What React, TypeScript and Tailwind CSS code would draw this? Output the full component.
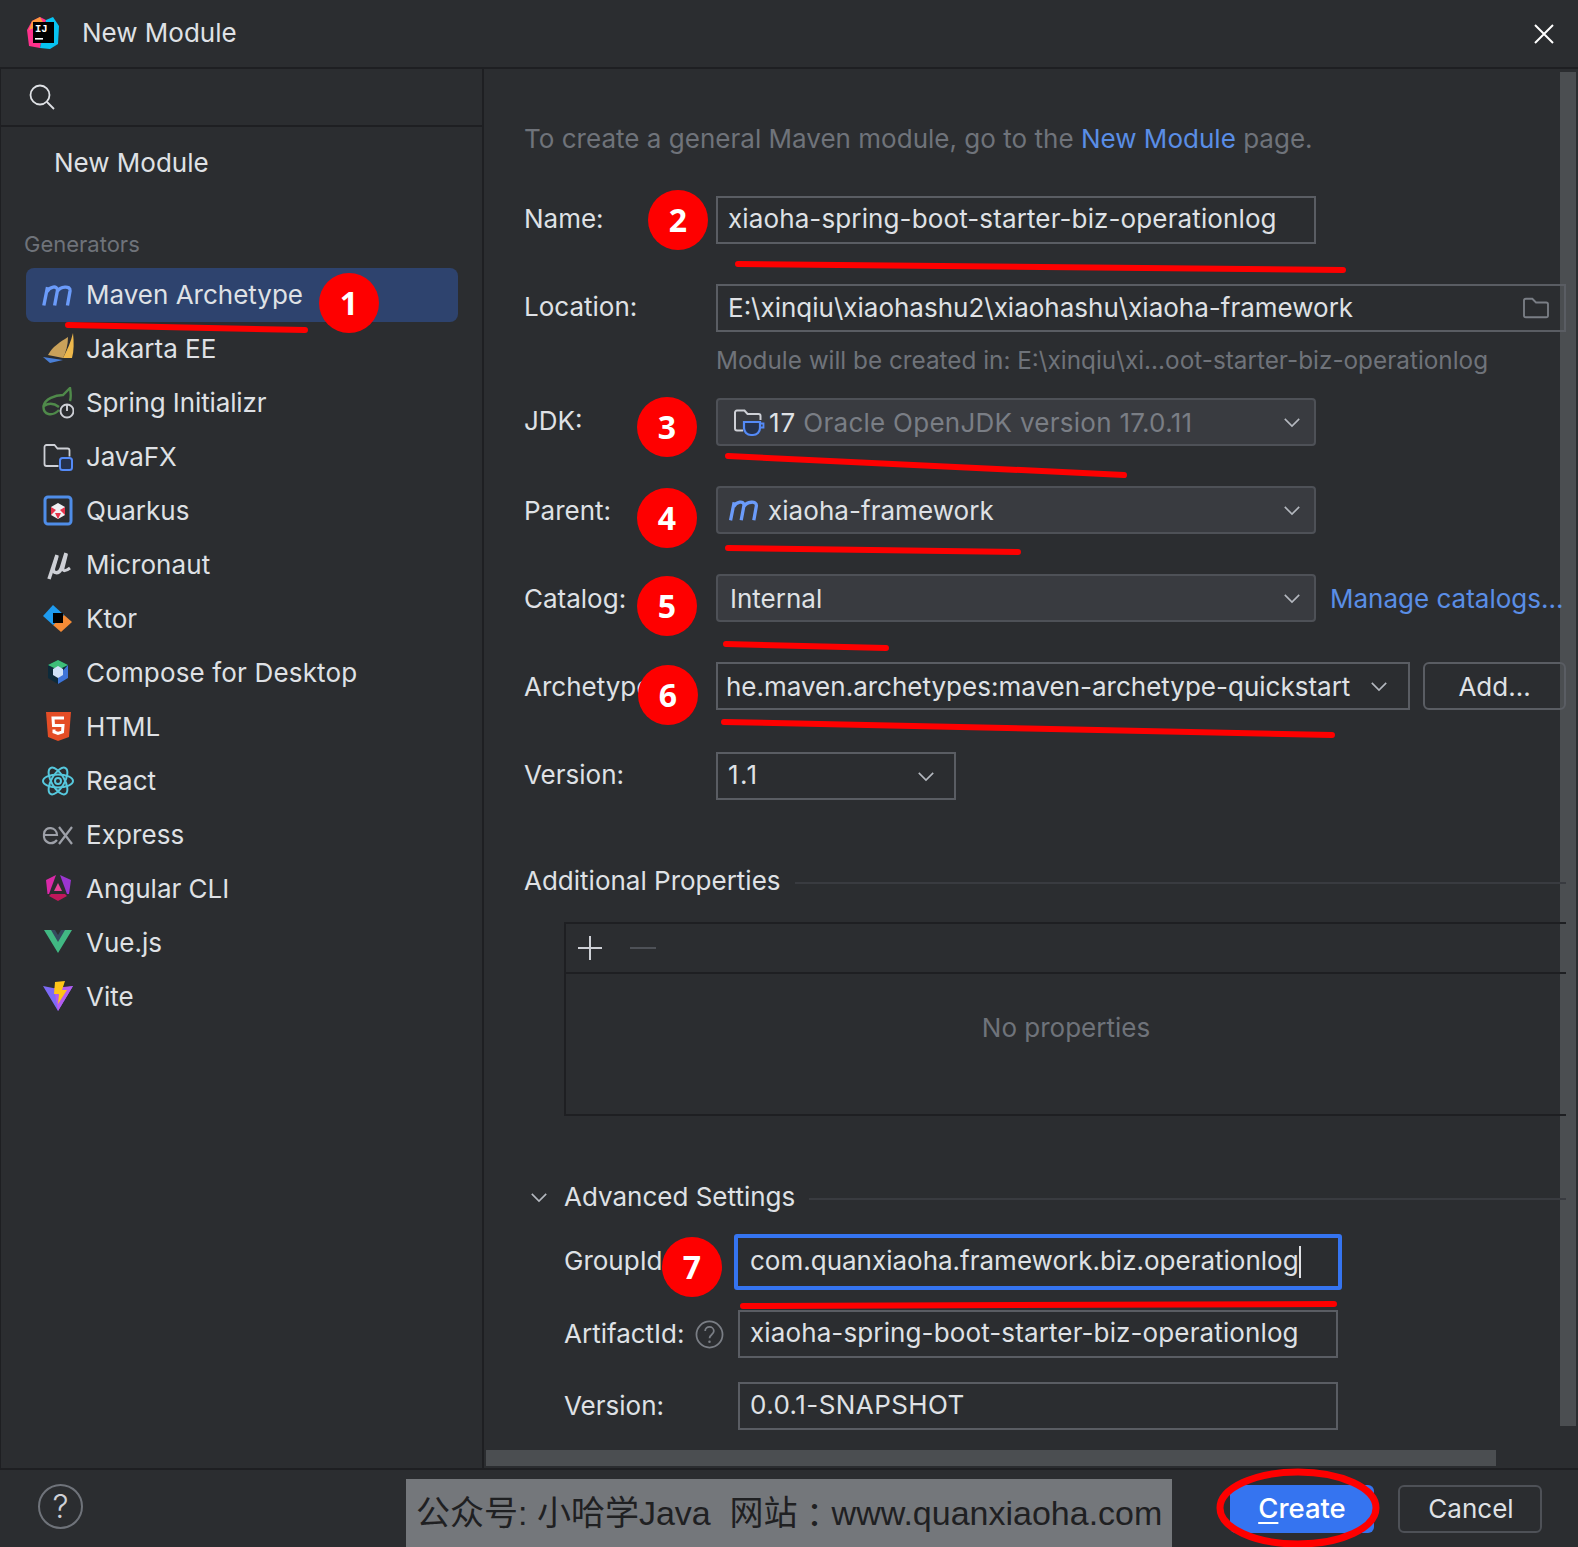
import React from "react";

const MavenIcon = ({ className = "" }: { className?: string }) => (
  <svg viewBox="0 0 30 20" className={className} fill="none">
    <path d="M1.5 19.5 L5 2 M4.5 6.5 C7 1.5 14.5 0 14.5 5 L11.8 19.5 M14.5 6 C17 1.5 27 0 26.5 5.5 L24 19.5" stroke="#6B9BFA" strokeWidth="3.2" />
  </svg>
);

const icons: Record<string, React.ReactNode> = {
  jakarta: (
    <svg viewBox="0 0 32 32" className="w-8 h-8">
      <path d="M6 22 C10 14 18 9 26 4 C26 12 24 19 21 25 Z" fill="#C9A15A" />
      <path d="M21 25 C25 17 29 9 31 0 C32 9 32 18 30 25 Z" fill="#EEB84C" />
      <path d="M1 24 L21 27 L8 30 Z" fill="#4A7FD6" />
    </svg>
  ),
  spring: (
    <svg viewBox="0 0 32 32" className="w-8 h-8" fill="none">
      <path d="M17 23 C10 30 1 28 1.5 19 C3 12 13 8 21 8 L28 1 C29 7 29 11 28 14 M2 19 C8 15 13 17 17 20" stroke="#4F8A4A" strokeWidth="2.4" />
      <circle cx="25" cy="24" r="6.5" stroke="#CED0D6" strokeWidth="1.9" fill="#2B2D30" />
      <path d="M25 17.5 V24" stroke="#CED0D6" strokeWidth="1.9" />
    </svg>
  ),
  javafx: (
    <svg viewBox="0 0 32 32" className="w-8 h-8" fill="none">
      <path d="M2.5 6 a2 2 0 0 1 2-2 h8 l3 3.5 h10 a2 2 0 0 1 2 2 v6 M2.5 6 v17 a2 2 0 0 0 2 2 h12" stroke="#CED0D6" strokeWidth="1.8" />
      <rect x="18" y="17" width="12" height="12" rx="2.5" stroke="#548AF7" strokeWidth="2" fill="#25324D" />
    </svg>
  ),
  quarkus: (
    <svg viewBox="0 0 32 32" className="w-8 h-8" fill="none">
      <rect x="3" y="2" width="26" height="27" rx="3" stroke="#4F8DE8" strokeWidth="3" />
      <path d="M16 8 L23 12 V20 L16 24 L9 20 V12 Z" fill="#F0F1F4" />
      <path d="M9 12 L14 15 L9 20 Z M23 12 L18 15 L23 20 Z M16 24 L13 18 H19 Z" fill="#E5344B" />
    </svg>
  ),
  micronaut: (
    <svg viewBox="0 0 32 32" className="w-8 h-8" fill="none" stroke="#CED0D6" strokeWidth="3.5">
      <path d="M15 6 L7 30" />
      <path d="M15 7 L11.5 19 C10 25 17 25 19 20 L24 4" />
      <path d="M24.5 5 L21 19 C20.5 23 24 22 28 19" strokeWidth="3" />
    </svg>
  ),
  ktor: (
    <svg viewBox="0 0 32 32" className="w-8 h-8">
      <path d="M22 12 L30 19 L19 29 L11 22 Z" fill="#F48B36" />
      <path d="M11 2 L22 12 L11 22 L1 13 Z" fill="#1E9BEF" />
      <rect x="11" y="10" width="10" height="10" fill="#000" />
    </svg>
  ),
  compose: (
    <svg viewBox="0 0 32 32" className="w-8 h-8">
      <path d="M16 3 L26 8 V21 L16 27 L6 21 V8 Z" fill="#0D2A3A" />
      <path d="M16 3 L26 8 L16 13 L6 8 Z" fill="#3DBE78" />
      <path d="M26 8 V21 L16 27 V19 Z" fill="#3E74D8" />
      <path d="M16 9 L21 12 V18 L16 21 L11 18 V12 Z" fill="#CFE2F8" />
    </svg>
  ),
  html: (
    <svg viewBox="0 0 32 32" className="w-8 h-8">
      <path d="M4 1 H29 L27 26 L16 30 L6 26 Z" fill="#E44D26" />
      <path d="M22 7 H11 L11.5 14.5 H21 L20.5 21 L16 22.5 L12 21 V18.5" fill="none" stroke="#fff" strokeWidth="3" />
    </svg>
  ),
  react: (
    <svg viewBox="0 0 32 32" className="w-8 h-8" fill="none" stroke="#56C8DD" strokeWidth="2">
      <ellipse cx="16" cy="16" rx="15" ry="6.5" />
      <ellipse cx="16" cy="16" rx="15" ry="6.5" transform="rotate(60 16 16)" />
      <ellipse cx="16" cy="16" rx="15" ry="6.5" transform="rotate(120 16 16)" />
      <circle cx="16" cy="16" r="3" />
    </svg>
  ),
  express: (
    <svg viewBox="0 0 32 32" className="w-8 h-8" fill="none" stroke="#9DA0A8" strokeWidth="2.2">
      <path d="M2 16 H15 C15 8 3 6 2 15 C1 24 10 27 15 21 M17 8 L30 25 M30 8 L17 25" />
    </svg>
  ),
  angular: (
    <svg viewBox="0 0 32 32" className="w-8 h-8">
      <path d="M4 7 L14 2 L7 21 L5.5 21 Z" fill="#D929A8" />
      <path d="M18 2 L29 7 L27 21 L25 21 Z" fill="#9B35D0" />
      <path d="M16 10 L20 18 H12 Z" fill="#E8459A" />
      <path d="M9 21 H23 L25 23 L16 28 L7 23 Z" fill="#C2185B" />
    </svg>
  ),
  vue: (
    <svg viewBox="0 0 32 32" className="w-8 h-8">
      <path d="M2 3 H10 L16 13 L22 3 H30 L16 26 Z" fill="#41B883" />
      <path d="M9 3 H13 L16 8 L19 3 H23 L16 15 Z" fill="#35495E" />
    </svg>
  ),
  vite: (
    <svg viewBox="0 0 32 32" className="w-8 h-8">
      <path d="M1 5 L16 8 L31 5 L16 30 Z" fill="#7C6AF5" />
      <path d="M12 7 L16 30 L31 5 Z" fill="#B45CEF" />
      <path d="M13 1 L23 0 L20 9 L25 9 L16 23 L17 13 L12 13 Z" fill="#FFC517" />
    </svg>
  ),
};

const items: [string, string, string][] = [
  ["jakarta", "Jakarta EE", ""],
  ["spring", "Spring Initializr", "tracking-[-0.12px]"],
  ["javafx", "JavaFX", "tracking-[-0.1px]"],
  ["quarkus", "Quarkus", ""],
  ["micronaut", "Micronaut", "tracking-[0.1px]"],
  ["ktor", "Ktor", ""],
  ["compose", "Compose for Desktop", "tracking-[0.16px]"],
  ["html", "HTML", ""],
  ["react", "React", "tracking-[0.1px]"],
  ["express", "Express", "tracking-[0.1px]"],
  ["angular", "Angular CLI", ""],
  ["vue", "Vue.js", ""],
  ["vite", "Vite", ""],
];

const Chevron = () => (
  <svg viewBox="0 0 20 12" className="w-[18px] h-[11px] shrink-0" fill="none">
    <path d="M2 2 L10 10 L18 2" stroke="#B4B8BF" strokeWidth="1.8" />
  </svg>
);

const Label = ({ children, cls = "" }: { children: React.ReactNode; cls?: string }) => (
  <div className={`w-[192px] shrink-0 text-[26px] leading-[30px] whitespace-nowrap overflow-hidden ${cls}`}>{children}</div>
);

const Badge = ({ n, cls }: { n: number; cls: string }) => (
  <div className={`absolute w-[60px] h-[60px] rounded-full bg-[#FE0000] flex items-center justify-center text-white text-[32px] font-bold font-['Open_Sans',sans-serif] ${cls}`}>
    {n}
  </div>
);

export default function App() {
  return (
    <div className="relative w-[1578px] h-[1547px] overflow-hidden flex flex-col bg-[#2B2D30] text-[#DFE1E5] font-['Inter',sans-serif]">
      {/* Scrollbars */}
      <div className="absolute left-[1560px] top-[72px] w-[16px] h-[1354px] bg-[#4B4E51]" />
      <div className="absolute left-[486px] top-[1450px] w-[1010px] h-[16px] bg-[#4B4E51]" />

      {/* Title bar */}
      <header className="h-[69px] shrink-0 flex items-center border-b-2 border-[#1E1F22] pl-[26px] pr-[24px] pb-[2px]">
        <svg viewBox="0 0 34 34" className="w-[34px] h-[34px] shrink-0">
          <path d="M6 5 L14 1 L20 4 L14 32 L3 30 L1 14 Z" fill="#FF318C" />
          <path d="M6 5 L14 1 L18 8 L3 14 Z" fill="#FE9A3D" />
          <path d="M20 4 L27 1 L33 10 L32 28 L24 33 L14 32 Z" fill="#07C3F2" />
          <rect x="7" y="6" width="21" height="21" fill="#000" />
          <text x="9" y="16" fontSize="10.5" fontWeight="700" fill="#fff" fontFamily="Liberation Mono, monospace">IJ</text>
          <rect x="9" y="22" width="8" height="1.6" fill="#fff" />
        </svg>
        <span className="ml-[22px] text-[26px] leading-[30px]">New Module</span>
        <svg viewBox="0 0 20 20" className="ml-auto w-[20px] h-[20px] mt-[2px]" fill="none">
          <path d="M1 1 L19 19 M19 1 L1 19" stroke="#fff" strokeWidth="2" />
        </svg>
      </header>

      <div className="flex-1 flex min-h-0">
        {/* Sidebar */}
        <aside className="w-[484px] shrink-0 border-x-2 border-l border-[#1E1F22] flex flex-col">
          <div className="h-[58px] shrink-0 border-b-2 border-[#1E1F22] flex items-center pl-[28px]">
            <svg viewBox="0 0 26 26" className="w-[26px] h-[26px]" fill="none" stroke="#DFE1E5" strokeWidth="1.8">
              <circle cx="11" cy="11" r="9.5" />
              <path d="M18 18 L25 25" />
            </svg>
          </div>
          <div className="pl-[53px] mt-[21px] text-[26px] leading-[30px]">New Module</div>
          <div className="pl-[23px] mt-[53px] text-[22px] leading-[26px] text-[#6F737A]">Generators</div>
          <div className="mt-[11px] pl-[25px] w-[457px] flex flex-col">
            <div className="h-[54px] rounded-[8px] bg-[#2E436E] flex items-center pl-[16px] gap-[12px]">
              <MavenIcon className="w-[32px] h-[21px]" />
              <span className="text-[26px] leading-[30px]">Maven Archetype</span>
            </div>
            {items.map(([k, t, tr]) => (
              <div key={k} className="h-[54px] flex items-center pl-[16px] gap-[12px]">
                {icons[k]}
                <span className={`text-[26px] leading-[30px] ${tr}`}>{t}</span>
              </div>
            ))}
          </div>
        </aside>

        {/* Form */}
        <main className="relative flex-1 min-w-0 pl-[40px] pr-[12px] flex flex-col">
          <div className="mt-[55px] h-[30px] text-[26px] leading-[30px] text-[#6F737A] whitespace-nowrap tracking-[0.02px]">
            To create a general Maven module, go to the <span className="text-[#5A8EE6]">New Module</span> page.
          </div>

          <div className="mt-[42px] flex items-center">
            <Label cls="pb-[2px]">Name:</Label>
            <div className="w-[600px] h-[48px] border-2 border-[#5A5D63] flex items-center pl-[10px] pb-[3px] text-[26px] tracking-[0.12px]">xiaoha-spring-boot-starter-biz-operationlog</div>
          </div>

          <div className="mt-[40px] flex items-center">
            <Label cls="pb-[2px]">Location:</Label>
            <div className="flex-1 h-[48px] border-2 border-[#5A5D63] flex items-center pl-[10px] pr-[14px] text-[26px]">
              <span className="pb-[2px]">E:\xinqiu\xiaohashu2\xiaohashu\xiaoha-framework</span>
              <svg viewBox="0 0 30 26" className="ml-auto w-[28px] h-[24px]" fill="none">
                <path d="M2 5 a2 2 0 0 1 2-2 h7 l4 4 h11 a2 2 0 0 1 2 2 v12 a2 2 0 0 1-2 2 h-22 a2 2 0 0 1-2-2 Z" stroke="#7A7E85" strokeWidth="2" />
              </svg>
            </div>
          </div>

          <div className="mt-[13px] ml-[192px] h-[30px] text-[24.3px] leading-[30px] text-[#6F737A] whitespace-nowrap">
            Module will be created in: E:\xinqiu\xi...oot-starter-biz-operationlog
          </div>

          <div className="mt-[23px] flex items-center">
            <Label cls="pb-[2px]">JDK:</Label>
            <div className="w-[600px] h-[48px] border-2 border-[#4E5157] rounded-[4px] bg-[#393B40] flex items-center pl-[15px] pr-[13px] text-[26px]">
              <svg viewBox="0 0 32 32" className="w-[32px] h-[32px] shrink-0" fill="none">
                <path d="M2 6.5 a2 2 0 0 1 2-2 h7.5 l3 3.5 h11 a2 2 0 0 1 2 2 v4 M2 6.5 v16 a2 2 0 0 0 2 2 h6" stroke="#CED0D6" strokeWidth="2" />
                <path d="M11 16 H27 V22 a7 7 0 0 1-7 7 h-2 a7 7 0 0 1-7-7 Z" fill="#25324D" stroke="#548AF7" strokeWidth="2.2" />
                <path d="M27 17.5 h3.5 v4 h-3.5" stroke="#548AF7" strokeWidth="1.8" />
              </svg>
              <span className="ml-[4px] tracking-[1px]">17</span>
              <span className="ml-[7px] text-[#7A7E85] tracking-[0.27px]">Oracle OpenJDK version 17.0.11</span>
              <span className="ml-auto"><Chevron /></span>
            </div>
          </div>

          <div className="mt-[40px] flex items-center">
            <Label cls="pt-[2px]">Parent:</Label>
            <div className="w-[600px] h-[48px] border-2 border-[#4E5157] rounded-[4px] bg-[#393B40] flex items-center pl-[11px] pr-[13px] text-[26px]">
              <MavenIcon className="w-[31px] h-[21px] shrink-0" />
              <span className="ml-[8px] tracking-[0.05px]">xiaoha-framework</span>
              <span className="ml-auto"><Chevron /></span>
            </div>
          </div>

          <div className="mt-[40px] flex items-center">
            <Label cls="pt-[2px]">Catalog:</Label>
            <div className="w-[600px] h-[48px] border-2 border-[#4E5157] rounded-[4px] bg-[#393B40] flex items-center pl-[12px] pr-[13px] text-[26px]">
              Internal
              <span className="ml-auto"><Chevron /></span>
            </div>
            <span className="ml-[14px] text-[26px] text-[#5A8EE6] whitespace-nowrap">Manage catalogs...</span>
          </div>

          <div className="mt-[40px] flex items-center">
            <Label cls="pt-[2px]">Archetype:</Label>
            <div className="w-[694px] h-[48px] border-2 border-[#5A5D63] flex items-center pl-[8px] pr-[20px] text-[26px] whitespace-nowrap">
              he.maven.archetypes:maven-archetype-quickstart
              <span className="ml-auto"><Chevron /></span>
            </div>
            <div className="ml-[13px] flex-1 h-[48px] border-2 border-[#5A5D63] rounded-[6px] flex items-center justify-center text-[26px]">Add...</div>
          </div>

          <div className="mt-[42px] flex items-center">
            <Label cls="pb-[2px]">Version:</Label>
            <div className="w-[240px] h-[48px] border-2 border-[#5A5D63] flex items-center pl-[10px] pb-[3px] pr-[19px] text-[26px]">
              <span className="tracking-[1.3px]">1.1</span>
              <span className="ml-auto mt-[3px]"><Chevron /></span>
            </div>
          </div>

          <div className="mt-[66px] h-[30px] flex items-center gap-[14px]">
            <span className="text-[26px] leading-[30px] whitespace-nowrap">Additional Properties</span>
            <div className="flex-1 h-[2px] mt-[3px] bg-[#393B40]" />
          </div>

          <div className="mt-[26px] ml-[40px] h-[194px] border-2 border-r-0 border-[#1E1F22] flex flex-col">
            <div className="h-[50px] shrink-0 border-b-2 border-[#1E1F22] flex items-center pl-[10px] gap-[26px]">
              <svg viewBox="0 0 28 28" className="w-[28px] h-[28px]" fill="none">
                <path d="M14 2 V26 M2 14 H26" stroke="#CED0D6" strokeWidth="2" />
              </svg>
              <div className="w-[26px] h-[2px] bg-[#4E5157]" />
            </div>
            <div className="flex-1 pb-[34px] flex items-center justify-center text-[26px] text-[#6F737A]">No properties</div>
          </div>

          <div className="mt-[66px] h-[30px] flex items-center">
            <svg viewBox="0 0 20 12" className="ml-[6px] w-[18px] h-[11px]" fill="none">
              <path d="M2 2 L10 10 L18 2" stroke="#B4B8BF" strokeWidth="1.8" />
            </svg>
            <span className="ml-[16px] text-[26px] leading-[30px] whitespace-nowrap">Advanced Settings</span>
            <div className="ml-[14px] flex-1 h-[2px] mt-[3px] bg-[#393B40]" />
          </div>

          <div className="mt-[22px] ml-[40px] flex items-center">
            <div className="w-[170px] shrink-0 text-[26px] leading-[30px] whitespace-nowrap overflow-hidden pb-[2px]">GroupId:</div>
            <div className="w-[608px] h-[56px] border-[4px] border-[#3574F0] rounded-[3px] flex items-center pl-[12px] text-[26px]">
              <span className="pb-[3px]">com.quanxiaoha.framework.biz.operationlog</span>
              <span className="w-[2px] h-[32px] bg-[#DFE1E5]" />
            </div>
          </div>

          <div className="mt-[20px] ml-[40px] flex items-center">
            <div className="w-[174px] shrink-0 flex items-center text-[26px] leading-[30px] whitespace-nowrap">
              ArtifactId:
              <svg viewBox="0 0 30 30" className="ml-[10px] w-[29px] h-[29px]" fill="none">
                <circle cx="15" cy="15" r="13.5" stroke="#7A7E85" strokeWidth="1.8" />
                <path d="M10.5 11.5 C10.5 5.5 19.5 6 19.5 11.5 C19.5 15 15 15 15 19" stroke="#7A7E85" strokeWidth="1.8" />
                <circle cx="15" cy="22.5" r="1.3" fill="#7A7E85" />
              </svg>
            </div>
            <div className="w-[600px] h-[48px] border-2 border-[#5A5D63] flex items-center pl-[10px] pb-[3px] text-[26px] tracking-[0.12px]">xiaoha-spring-boot-starter-biz-operationlog</div>
          </div>

          <div className="mt-[24px] ml-[40px] flex items-center">
            <div className="w-[174px] shrink-0 text-[26px] leading-[30px]">Version:</div>
            <div className="w-[600px] h-[48px] border-2 border-[#5A5D63] flex items-center pl-[10px] pb-[3px] text-[26px] tracking-[0.43px]">0.0.1-SNAPSHOT</div>
          </div>
        </main>
      </div>

      {/* Footer */}
      <footer className="h-[79px] shrink-0 border-t-2 border-[#1E1F22] flex items-center pl-[38px] pr-[36px] gap-[24px]">
        <div className="w-[45px] h-[45px] rounded-full border-2 border-[#6F737A] flex items-center justify-center text-[32px] font-light text-[#CED0D6] -mt-[4px] mr-auto">?</div>
        <div className="w-[144px] h-[48px] rounded-[6px] bg-[#3574F0] flex items-center justify-center text-[27.5px] font-medium text-white pt-[1px]">
          <span><span className="underline underline-offset-4">C</span>reate</span>
        </div>
        <div className="w-[144px] h-[48px] rounded-[6px] border-2 border-[#4E5157] flex items-center justify-center pl-[2px] text-[26px]">Cancel</div>
      </footer>

      {/* Watermark */}
      <div className="absolute left-[406px] top-[1479px] w-[766px] h-[68px] bg-[#74777B] flex items-center pl-[10px] text-[34px] text-[#1F2022] whitespace-nowrap font-['Liberation_Sans','Noto_Sans_CJK_SC',sans-serif]">
        公众号: 小哈学Java&nbsp;&nbsp;网站<span className="font-['Noto_Sans_CJK_TC',sans-serif]">：</span>www.quanxiaoha.com
      </div>

      {/* Hand-drawn annotations */}
      <svg className="absolute inset-0 w-[1578px] h-[1547px] pointer-events-none" viewBox="0 0 1578 1547" fill="none" stroke="#FE0000" strokeLinecap="round">
        <path d="M68 325 L305 330" strokeWidth="6" />
        <path d="M738 264 Q1040 268 1343 270" strokeWidth="6" />
        <path d="M728 456 L1124 475" strokeWidth="6" />
        <path d="M728 548 L1018 552" strokeWidth="6" />
        <path d="M726 644 L886 648" strokeWidth="6" />
        <path d="M724 722 L1332 735" strokeWidth="6" />
        <path d="M743 1306 L1334 1304" strokeWidth="6" />
        <ellipse cx="1298" cy="1508" rx="78" ry="36" strokeWidth="7" />
      </svg>
      <Badge n={1} cls="left-[319px] top-[273px]" />
      <Badge n={2} cls="left-[648px] top-[190px]" />
      <Badge n={3} cls="left-[637px] top-[397px]" />
      <Badge n={4} cls="left-[637px] top-[488px]" />
      <Badge n={5} cls="left-[637px] top-[576px]" />
      <Badge n={6} cls="left-[638px] top-[665px]" />
      <Badge n={7} cls="left-[662px] top-[1237px]" />
    </div>
  );
}
